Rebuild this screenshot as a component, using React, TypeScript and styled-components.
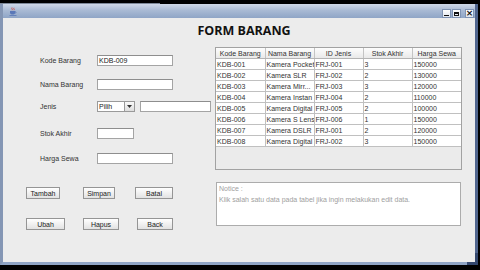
import React from 'react';
import styled, { createGlobalStyle } from 'styled-components';

interface Barang {
  kode: string;
  nama: string;
  jenis: string;
  stok: number;
  harga: number;
}

const dataBarang: Barang[] = [
  { kode: 'KDB-001', nama: 'Kamera Pocket', jenis: 'FRJ-001', stok: 3, harga: 150000 },
  { kode: 'KDB-002', nama: 'Kamera SLR', jenis: 'FRJ-002', stok: 2, harga: 130000 },
  { kode: 'KDB-003', nama: 'Kamera Mirr...', jenis: 'FRJ-003', stok: 3, harga: 120000 },
  { kode: 'KDB-004', nama: 'Kamera Instan', jenis: 'FRJ-004', stok: 2, harga: 110000 },
  { kode: 'KDB-005', nama: 'Kamera Digital', jenis: 'FRJ-005', stok: 2, harga: 100000 },
  { kode: 'KDB-006', nama: 'Kamera S Lens', jenis: 'FRJ-006', stok: 1, harga: 150000 },
  { kode: 'KDB-007', nama: 'Kamera DSLR', jenis: 'FRJ-001', stok: 2, harga: 120000 },
  { kode: 'KDB-008', nama: 'Kamera Digital', jenis: 'FRJ-002', stok: 3, harga: 150000 },
];

const kolom = ['Kode Barang', 'Nama Barang', 'ID Jenis', 'Stok Akhir', 'Harga Sewa'];

const GlobalStyle = createGlobalStyle`
  html, body {
    margin: 0;
    padding: 0;
    background: #000;
    overflow: hidden;
  }
  body {
    font-family: "Liberation Sans", Arial, sans-serif;
  }
`;

function JavaIcon() {
  return (
    <svg width="8" height="9" viewBox="0 0 8 9">
      <path d="M3 0.5 C2 1.5 4 2 3 3.2 M5 0.8 C4.2 1.8 5.8 2.2 5 3.2" stroke="#d04030" strokeWidth="0.8" fill="none" />
      <path d="M1 4 H6.2 V5.5 C6.2 7 5 7.6 3.6 7.6 C2.2 7.6 1 7 1 5.5 Z" fill="#5a78b8" />
      <path d="M6.2 4.6 C7.6 4.6 7.6 6 6 6.2" stroke="#5a78b8" strokeWidth="0.7" fill="none" />
      <rect x="0.5" y="8" width="7" height="0.8" fill="#5a78b8" />
    </svg>
  );
}

export default function App() {
  return (
    <>
      <GlobalStyle />
      <Style.Screen>
        <Style.TopEdge />
        <Style.Window>
          <Style.TitleBar>
            <JavaIcon />
            <Style.TitleButtons>
              <Style.FrameButton>
                <Style.MinGlyph />
              </Style.FrameButton>
              <Style.FrameButton>
                <Style.MaxGlyph />
              </Style.FrameButton>
              <Style.FrameButton $close>×</Style.FrameButton>
            </Style.TitleButtons>
          </Style.TitleBar>

          <Style.Body>
            <Style.FormTitle>FORM BARANG</Style.FormTitle>

            <Style.Section $top={9}>
              <Style.Form>
                <Style.FormRow $top={8}>
                  <Style.Label>Kode Barang</Style.Label>
                  <Style.TextField $width={76}>KDB-009</Style.TextField>
                </Style.FormRow>
                <Style.FormRow $top={13}>
                  <Style.Label>Nama Barang</Style.Label>
                  <Style.TextField $width={76} />
                </Style.FormRow>
                <Style.FormRow $top={11}>
                  <Style.Label>Jenis</Style.Label>
                  <Style.Combo>
                    <Style.ComboText>Pilih</Style.ComboText>
                    <Style.ComboArrow>
                      <svg width="5" height="3" viewBox="0 0 5 3">
                        <path d="M0 0 H5 L2.5 3 Z" fill="#333" />
                      </svg>
                    </Style.ComboArrow>
                  </Style.Combo>
                  <Style.TextField $width={71} $gap={5} />
                </Style.FormRow>
                <Style.FormRow $top={16}>
                  <Style.Label>Stok Akhir</Style.Label>
                  <Style.TextField $width={37} />
                </Style.FormRow>
                <Style.FormRow $top={14}>
                  <Style.Label>Harga Sewa</Style.Label>
                  <Style.TextField $width={76} />
                </Style.FormRow>
              </Style.Form>

              <Style.TablePane>
                <Style.Table>
                  <thead>
                    <tr>
                      {kolom.map(k => (
                        <Style.HeadCell key={k}>{k}</Style.HeadCell>
                      ))}
                    </tr>
                  </thead>
                  <tbody>
                    {dataBarang.map(b => (
                      <tr key={b.kode}>
                        <Style.Cell>{b.kode}</Style.Cell>
                        <Style.Cell>{b.nama}</Style.Cell>
                        <Style.Cell>{b.jenis}</Style.Cell>
                        <Style.Cell>{b.stok}</Style.Cell>
                        <Style.Cell>{b.harga}</Style.Cell>
                      </tr>
                    ))}
                  </tbody>
                </Style.Table>
              </Style.TablePane>
            </Style.Section>

            <Style.Section $top={12}>
              <Style.ButtonGrid>
                <Style.Button $width={34}>Tambah</Style.Button>
                <Style.Button $width={32}>Simpan</Style.Button>
                <Style.Button $width={38}>Batal</Style.Button>
                <Style.Button $width={39}>Ubah</Style.Button>
                <Style.Button $width={36}>Hapus</Style.Button>
                <Style.Button $width={36} $shift={2}>Back</Style.Button>
              </Style.ButtonGrid>

              <Style.Notice>
                Notice :
                <br />
                Klik salah satu data pada tabel jika ingin melakukan edit data.
              </Style.Notice>
            </Style.Section>
          </Style.Body>
        </Style.Window>
      </Style.Screen>
    </>
  );
}

const Style = {
  Screen: styled.div`
    position: relative;
    width: 480px;
    height: 270px;
    background: #000;
    overflow: hidden;
  `,
  TopEdge: styled.div`
    height: 4px;
    background: linear-gradient(to bottom, #000 0 3px, #7d8898 3px);
    background-size: 160px 4px;
    background-repeat: no-repeat;
  `,
  Window: styled.div`
    position: relative;
    width: 478px;
    height: 261px;
    box-sizing: border-box;
    border-left: 3px solid #8496b4;
    border-right: 3px solid #50658e;
    border-bottom: 3px solid #8fa4c4;
    background: #ececec;
    display: flex;
    flex-direction: column;
    &::after {
      content: '';
      position: absolute;
      right: -3px;
      bottom: -3px;
      width: 11px;
      height: 12px;
      border-right: 3px solid #33476e;
      border-bottom: 3px solid #33476e;
      box-sizing: border-box;
    }
  `,
  TitleBar: styled.div`
    height: 14px;
    flex: none;
    display: flex;
    align-items: center;
    justify-content: space-between;
    padding: 0 1px 0 6px;
    background: linear-gradient(to bottom, #cfd8e7 0%, #a9bad4 45%, #8fa5c6 100%);
  `,
  TitleButtons: styled.div`
    display: flex;
    align-self: flex-end;
    gap: 1px;
  `,
  FrameButton: styled.div<{ $close?: boolean }>`
    width: 9px;
    height: 9px;
    box-sizing: border-box;
    margin-left: ${p => (p.$close ? '3px' : '0')};
    background: linear-gradient(to bottom, #ffffff, #dfe5ee);
    border: 1px solid #7f93b3;
    display: flex;
    align-items: center;
    justify-content: center;
    font: bold 9px/7px "DejaVu Sans", sans-serif;
    color: #111;
  `,
  MinGlyph: styled.div`
    width: 5px;
    height: 1px;
    margin-top: 4px;
    background: #111;
  `,
  MaxGlyph: styled.div`
    width: 5px;
    height: 4px;
    box-sizing: border-box;
    border: 1px solid #111;
    border-top-width: 2px;
  `,
  Body: styled.div`
    flex: 1;
    display: flex;
    flex-direction: column;
    padding-top: 6px;
  `,
  FormTitle: styled.div`
    padding-left: 10px;
    text-align: center;
    font: bold 12.5px/14px "Open Sans", "Liberation Sans", sans-serif;
    color: #111;
  `,
  Section: styled.div<{ $top: number }>`
    margin-top: ${p => p.$top}px;
    display: grid;
    grid-template-columns: 212px 247px;
  `,
  Form: styled.div`
    padding-left: 37px;
    display: flex;
    flex-direction: column;
  `,
  FormRow: styled.div<{ $top: number }>`
    margin-top: ${p => p.$top}px;
    height: 11px;
    display: flex;
    align-items: center;
  `,
  Label: styled.div`
    width: 57px;
    flex: none;
    font-size: 7px;
    color: #333;
  `,
  TextField: styled.div<{ $width: number; $gap?: number }>`
    width: ${p => p.$width}px;
    height: 11px;
    margin-left: ${p => p.$gap ?? 0}px;
    box-sizing: border-box;
    flex: none;
    background: #fff;
    border: 1px solid #a4a4a4;
    border-top-color: #8e8e8e;
    padding-left: 1px;
    font-size: 7px;
    line-height: 9px;
    color: #222;
  `,
  Combo: styled.div`
    width: 38px;
    height: 11px;
    box-sizing: border-box;
    flex: none;
    display: flex;
    background: #fff;
    border: 1px solid #9a9a9a;
  `,
  ComboText: styled.div`
    flex: 1;
    padding-left: 1px;
    font-size: 7px;
    line-height: 9px;
    color: #222;
  `,
  ComboArrow: styled.div`
    width: 9px;
    border-left: 1px solid #9a9a9a;
    background: linear-gradient(to bottom, #fafafa, #dedede);
    display: flex;
    align-items: center;
    justify-content: center;
  `,
  TablePane: styled.div`
    height: 123px;
    box-sizing: border-box;
    border: 1px solid #a2a2a2;
    background: #ebebeb;
    overflow: hidden;
  `,
  Table: styled.table`
    width: 100%;
    table-layout: fixed;
    border-collapse: collapse;
    font-size: 7px;
    color: #333;
  `,
  HeadCell: styled.th`
    height: 10px;
    padding: 0;
    font-weight: normal;
    text-align: center;
    color: #333;
    background: linear-gradient(to bottom, #fdfdfd, #e9e9e9);
    border-right: 1px solid #c4c4c4;
    border-bottom: 1px solid #b4b4b4;
    white-space: nowrap;
    overflow: hidden;
    &:last-child {
      border-right: none;
    }
  `,
  Cell: styled.td`
    height: 10px;
    padding: 0 0 0 1px;
    background: #fff;
    border-right: 1px solid #c0c0c0;
    border-bottom: 1px solid #c0c0c0;
    white-space: nowrap;
    overflow: hidden;
    text-overflow: clip;
    &:last-child {
      border-right: none;
    }
  `,
  ButtonGrid: styled.div`
    padding: 5px 0 0 23px;
    display: grid;
    grid-template-columns: 57px 52px auto;
    grid-auto-rows: 12px;
    row-gap: 19px;
    align-content: start;
  `,
  Button: styled.div<{ $width: number; $shift?: number }>`
    width: ${p => p.$width}px;
    height: 12px;
    margin-left: ${p => p.$shift ?? 0}px;
    box-sizing: border-box;
    border: 1px solid #959595;
    background: linear-gradient(to bottom, #ffffff, #e2e2e2);
    display: flex;
    align-items: center;
    justify-content: center;
    font-size: 7px;
    color: #222;
  `,
  Notice: styled.div`
    margin-left: 1px;
    width: 245px;
    height: 44px;
    box-sizing: border-box;
    background: #fff;
    border: 1px solid #acacac;
    padding: 0 2px;
    font-size: 7px;
    line-height: 11px;
    color: #a0a0a0;
  `,
};
